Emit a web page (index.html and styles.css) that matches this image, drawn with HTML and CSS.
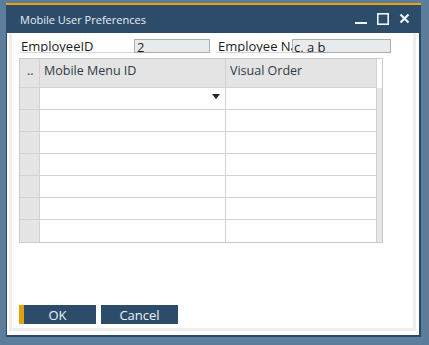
FILE: index.html
```html
<!DOCTYPE html>
<html lang="en">
<head>
    <meta charset="UTF-8">
    <meta name="viewport" content="width=device-width, initial-scale=1.0">
    <title>Mobile User Preferences</title>
    <link rel="stylesheet" href="styles.css">
</head>
<body>
    <div class="window">
        <div class="titlebar">
            <span class="title">Mobile User Preferences</span>
            <svg class="controls" width="56" height="28" viewBox="0 0 56 28">
                <rect x="0" y="17" width="12" height="2" fill="#f2f5f8"/>
                <rect x="22.8" y="8.8" width="10.4" height="10.4" fill="none" stroke="#f2f5f8" stroke-width="1.6"/>
                <path d="M45.5 9.5 L53.5 17.5 M53.5 9.5 L45.5 17.5" stroke="#f2f5f8" stroke-width="2.2"/>
            </svg>
        </div>
        <div class="frame">
            <div class="content">
                <div class="fields">
                    <div class="field-label first">EmployeeID</div>
                    <div class="field-input short">2</div>
                    <div class="field-label second">Employee Name</div>
                    <div class="field-input long">c, a b</div>
                </div>

                <div class="grid">
                    <div class="row header">
                        <div class="cell rowhead">..</div>
                        <div class="cell col-menu">Mobile Menu ID</div>
                        <div class="cell col-order">Visual Order</div>
                        <div class="cell strip"></div>
                    </div>
                    <div class="row">
                        <div class="cell rowhead"></div>
                        <div class="cell col-menu"><span class="dropdown"></span></div>
                        <div class="cell col-order"></div>
                        <div class="cell strip"></div>
                    </div>
                    <div class="row">
                        <div class="cell rowhead"></div>
                        <div class="cell col-menu"></div>
                        <div class="cell col-order"></div>
                        <div class="cell strip"></div>
                    </div>
                    <div class="row">
                        <div class="cell rowhead"></div>
                        <div class="cell col-menu"></div>
                        <div class="cell col-order"></div>
                        <div class="cell strip"></div>
                    </div>
                    <div class="row">
                        <div class="cell rowhead"></div>
                        <div class="cell col-menu"></div>
                        <div class="cell col-order"></div>
                        <div class="cell strip"></div>
                    </div>
                    <div class="row">
                        <div class="cell rowhead"></div>
                        <div class="cell col-menu"></div>
                        <div class="cell col-order"></div>
                        <div class="cell strip"></div>
                    </div>
                    <div class="row">
                        <div class="cell rowhead"></div>
                        <div class="cell col-menu"></div>
                        <div class="cell col-order"></div>
                        <div class="cell strip"></div>
                    </div>
                    <div class="row">
                        <div class="cell rowhead"></div>
                        <div class="cell col-menu"></div>
                        <div class="cell col-order"></div>
                        <div class="cell strip"></div>
                    </div>
                </div>

                <div class="buttons">
                    <button class="btn primary">OK</button>
                    <button class="btn">Cancel</button>
                </div>
            </div>
        </div>
    </div>
</body>
</html>
```

FILE: styles.css
```css
html {
    box-sizing: border-box;
}

*, *::before, *::after {
    box-sizing: inherit;
}

body {
    margin: 0;
    padding: 3px 0 0 6px;
    height: 345px;
    overflow: hidden;
    background: #5c7e9c;
    font-family: "Open Sans", "DejaVu Sans", sans-serif;
}

.window {
    width: 415px;
    border-top: 2px solid #e9a20f;
}

.titlebar {
    height: 28px;
    background: #2c4c6a;
    display: flex;
    align-items: center;
    justify-content: space-between;
    padding: 0 10px 0 14px;
}

.title {
    color: #e8eef4;
    font-size: 11px;
    line-height: 28px;
    padding-top: 1px;
}

.controls {
    display: block;
}

.frame {
    background: #fff;
    border: solid #2b4a67;
    border-width: 0 2px 2px 1px;
    padding: 0 3px 4px 2px;
}

.content {
    height: 298px;
    background: #fff;
    border: solid #efefef;
    border-width: 0 3px 3px 3px;
    padding: 6px 0 4px 4px;
    display: flex;
    flex-direction: column;
}

/* header fields */
.fields {
    display: flex;
    align-items: flex-start;
    height: 14px;
    margin-left: 3px;
}

.field-label {
    height: 14px;
    font-size: 13px;
    line-height: 15px;
    color: #1b1b1b;
    padding-left: 2px;
    overflow: hidden;
    white-space: nowrap;
    border-bottom: 1px solid #d3d8dd;
}

.field-label.first {
    width: 115px;
}

.field-label.second {
    width: 76px;
    margin-left: 6px;
}

.field-input {
    height: 14px;
    background: #e8ebee;
    border: 1px solid #a9acaf;
    font-size: 13px;
    line-height: 14px;
    color: #1b1b1b;
    padding-left: 2px;
    overflow: hidden;
    white-space: nowrap;
}

.field-input.short {
    width: 76px;
}

.field-input.long {
    width: 99px;
    padding-left: 1px;
}

/* matrix */
.grid {
    margin: 5px 0 0 3px;
    width: 364px;
    border: 1px solid #cacaca;
}

.row {
    display: flex;
    height: 22px;
}

.row.header {
    height: 29px;
}

.cell {
    position: relative;
    border-right: 1px solid #d2d2d2;
    border-bottom: 1px solid #d2d2d2;
    font-size: 12.5px;
    color: #2f3a45;
    padding: 3px 0 0 4px;
    white-space: nowrap;
}

.row:last-child .cell {
    border-bottom: none;
}

.rowhead {
    width: 20px;
    background: #e5e5e5;
}

.header .cell {
    background: #e4e4e4;
}

.header .rowhead {
    padding: 3px 0 0 7px;
}

.col-menu {
    width: 186px;
}

.col-order {
    width: 151px;
}

.cell.strip {
    width: 5px;
    padding: 0;
    border: none;
    background: #e7e7e7;
}

.header .cell.strip {
    background: #fff;
}

.dropdown {
    position: absolute;
    right: 5px;
    top: 6px;
    width: 0;
    height: 0;
    border-left: 4px solid transparent;
    border-right: 4px solid transparent;
    border-top: 5px solid #222;
}

/* buttons */
.buttons {
    margin: auto 0 0 3px;
    display: flex;
    gap: 5px;
}

.btn {
    width: 77px;
    height: 19px;
    border: none;
    background: #2c4c6a;
    color: #eef3f8;
    font-family: "Open Sans", "DejaVu Sans", sans-serif;
    font-size: 13px;
    line-height: 19px;
    padding: 1px 0 0;
    cursor: pointer;
}

.btn.primary {
    border-left: 5px solid #e5a00d;
    padding-right: 5px;
}
```
